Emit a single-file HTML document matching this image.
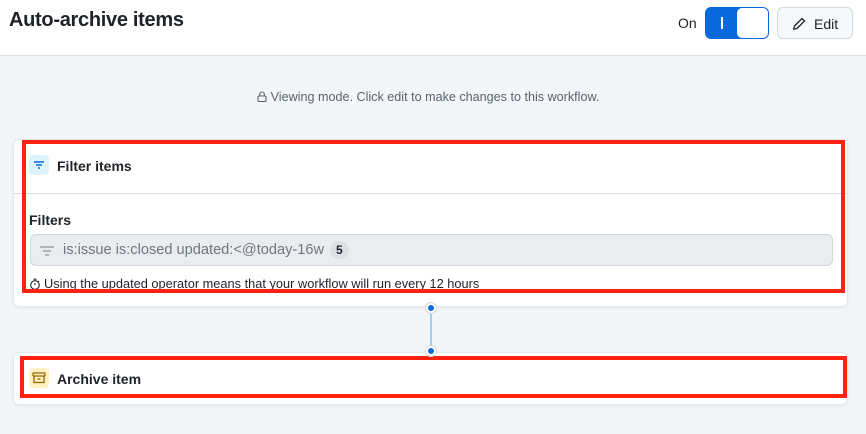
<!DOCTYPE html>
<html><head><style>
*{box-sizing:border-box;margin:0;padding:0}
body{width:866px;height:434px;background:#f3f6f9;font-family:"Liberation Sans",sans-serif;position:relative;overflow:hidden;color:#1f2328}
.hdr{position:absolute;left:0;top:0;width:866px;height:56px;background:#fff;border-bottom:1px solid #d8dee4}
.title{position:absolute;left:9px;top:9px;font-size:20px;font-weight:bold;letter-spacing:-0.3px}
.on{position:absolute;left:678px;top:15px;font-size:14px}
.tog{position:absolute;left:705px;top:7px;width:64px;height:32px;background:#0969da;border-radius:6px;border:1px solid #0969da}
.tog .k{position:absolute;right:0;top:0;width:31px;height:30px;background:#fff;border-radius:5px}
.tog .bar{position:absolute;left:15px;top:9px;width:1.5px;height:12px;background:#fff}
.edit{position:absolute;left:777px;top:7px;width:76px;height:32px;background:#f6f8fa;border:1px solid #d0d7de;border-radius:6px;font-size:14px;padding:8px 0 0 36px}
.edit svg{position:absolute;left:13px;top:8px}
.view{position:absolute;left:0;width:866px;top:90px;text-align:center;font-size:12.6px;color:#59636e;padding-right:10px}
.card{position:absolute;left:13px;width:835px;background:#fff;border:1px solid #e3e7eb;border-radius:6px;box-shadow:0 1px 3px rgba(0,0,0,.06)}
.red{position:absolute;border:4px solid #fe2210}
.ic{position:absolute;width:20px;height:20px;border-radius:4px}
.h{position:absolute;font-size:14px;font-weight:bold}
.inp{position:absolute;left:30px;top:234px;width:803px;height:32px;background:#eaedf0;border:1px solid #d0d7de;border-radius:6px;font-size:14.6px;color:#6e7781;padding:6px 0 0 32px}
.badge{display:inline-block;background:#dde1e5;color:#1f2328;border-radius:10px;font-size:12px;padding:2px 6px;margin-left:6px;font-weight:bold}
.dot{position:absolute;width:10px;height:10px;border-radius:50%;background:#0969da;border:2px solid #fff;box-shadow:0 0 0 1px #d0d7de;z-index:5}
</style></head><body>
<div class="hdr">
<div class="title">Auto-archive items</div>
<div class="on">On</div>
<div class="tog"><div class="bar"></div><div class="k"></div></div>
<div class="edit"><svg width="16" height="16" viewBox="0 0 16 16" fill="none" stroke="#1f2328" stroke-width="1.3"><path d="M11 2.5l2.5 2.5L6 12.5 2.8 13.2 3.5 10z"/></svg>Edit</div>
</div>
<div class="view"><svg width="10" height="11" viewBox="0 0 10 11" style="vertical-align:-1px;margin-right:4px" fill="none" stroke="#59636e" stroke-width="1.1"><rect x="1" y="5" width="8" height="5.5" rx="1"/><path d="M2.7 5V3.3a2.3 2.3 0 0 1 4.6 0V5"/></svg>Viewing mode. Click edit to make changes to this workflow.</div>

<div class="card" style="top:139px;height:168px">
<div style="position:absolute;left:0;right:0;top:53px;border-top:1px solid #d8dee4"></div>
</div>
<div class="ic" style="left:29px;top:155px;background:#ddf4ff"><svg width="20" height="20" viewBox="0 0 20 20" stroke="#0969da" stroke-width="1.4"><path d="M5 7h10M7 10h6M9 13h2"/></svg></div>
<div class="h" style="left:57px;top:158px">Filter items</div>
<div class="h" style="left:29px;top:212px">Filters</div>
<div class="inp"><svg width="16" height="16" viewBox="0 0 16 16" stroke="#8c959f" stroke-width="1.3" style="position:absolute;left:8px;top:8px"><path d="M1 4h14M4 8h8M6 12h4"/></svg>is:issue is:closed updated:&lt;@today-16w<span class="badge">5</span></div>
<div style="position:absolute;left:29px;top:276px;font-size:12.8px;color:#1f2328"><svg width="12" height="12" viewBox="0 0 12 12" fill="none" stroke="#1f2328" stroke-width="1.1" style="vertical-align:-2px;margin-right:3px"><circle cx="6" cy="7" r="4.3"/><path d="M6 7V5M4.5 1.2h3M10 3l-1 1"/></svg>Using the updated operator means that your workflow will run every 12 hours</div>
<div class="red" style="left:22px;top:140px;width:823px;height:153px"></div>

<div style="position:absolute;left:430px;top:308px;width:2px;height:43px;background:#9fd0f5"></div>
<div class="dot" style="left:426px;top:303px"></div>

<div class="card" style="top:352px;height:53px"></div>
<div class="dot" style="left:426px;top:346px"></div>
<div class="ic" style="left:29px;top:368px;background:#fff1c2"><svg width="20" height="20" viewBox="0 0 20 20" fill="none" stroke="#9a6700" stroke-width="1.3"><rect x="4" y="5" width="12" height="3" rx=".5"/><path d="M5 8v6.5h10V8M8.5 11h3"/></svg></div>
<div class="h" style="left:57px;top:371px">Archive item</div>
<div class="red" style="left:20px;top:356px;width:827px;height:42px"></div>
</body></html>
